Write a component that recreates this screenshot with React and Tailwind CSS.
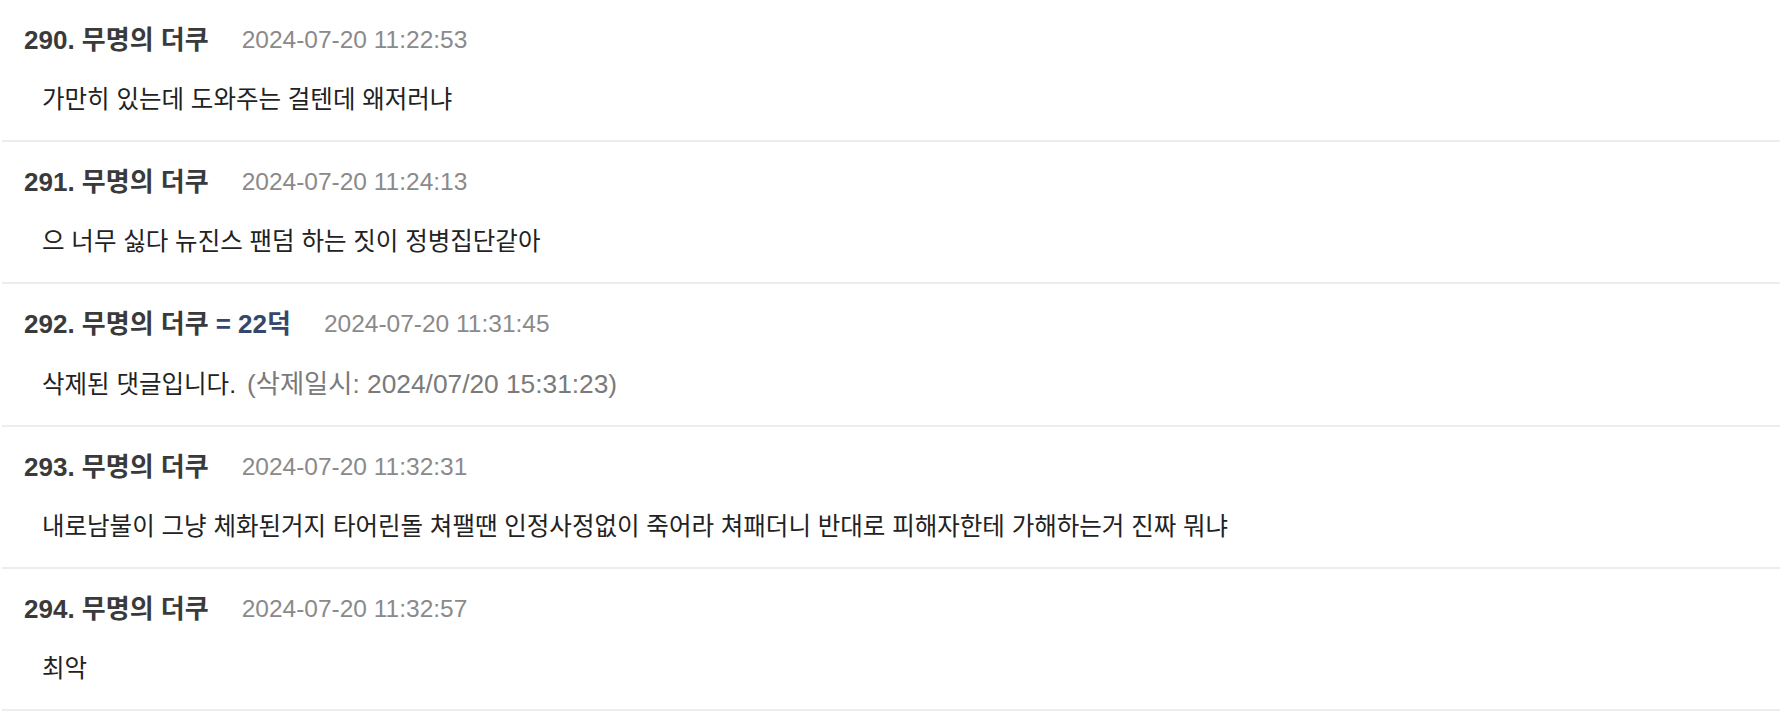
import React from 'react';

const comments = [
  {
    no: 290,
    name: '무명의 더쿠',
    date: '2024-07-20 11:22:53',
    body: '가만히 있는데 도와주는 걸텐데 왜저러냐',
  },
  {
    no: 291,
    name: '무명의 더쿠',
    date: '2024-07-20 11:24:13',
    body: '으 너무 싫다 뉴진스 팬덤 하는 짓이 정병집단같아',
  },
  {
    no: 292,
    name: '무명의 더쿠',
    tag: '= 22덕',
    date: '2024-07-20 11:31:45',
    body: '삭제된 댓글입니다.',
    deleted: '(삭제일시: 2024/07/20 15:31:23)',
  },
  {
    no: 293,
    name: '무명의 더쿠',
    date: '2024-07-20 11:32:31',
    body: '내로남불이 그냥 체화된거지 타어린돌 쳐팰땐 인정사정없이 죽어라 쳐패더니 반대로 피해자한테 가해하는거 진짜 뭐냐',
  },
  {
    no: 294,
    name: '무명의 더쿠',
    date: '2024-07-20 11:32:57',
    body: '최악',
  },
];

const Comment = ({ c }) => (
  <li className="border-b-2 border-[#ededed] pl-[22px] pt-[23px] pb-[23px]">
    {/* header */}
    <div className="flex items-center leading-[34px]">
      <span className="text-[26px] font-bold text-[#3a3a3a]">
        {c.no}. {c.name}
        {c.tag && <span className="ml-[7px] text-[#33486b]">{c.tag}</span>}
      </span>
      <span className="ml-[33px] text-[24.5px] text-[#8a8a8a]">{c.date}</span>
    </div>

    {/* body */}
    <div className="mt-[26px] pl-[18px] text-[24.5px] leading-[34px] text-[#222]">
      {c.body}
      {c.deleted && (
        <span className="ml-[11px] text-[26.3px] text-[#7a7a7a]">{c.deleted}</span>
      )}
    </div>
  </li>
);

export default function App() {
  return (
    <div
      className="min-h-screen w-[1780px] bg-white pl-[2px]"
      style={{ fontFamily: '"Liberation Sans", "Noto Sans CJK KR", sans-serif' }}
    >
      <ul>
        {comments.map((c) => (
          <Comment key={c.no} c={c} />
        ))}
      </ul>
    </div>
  );
}
